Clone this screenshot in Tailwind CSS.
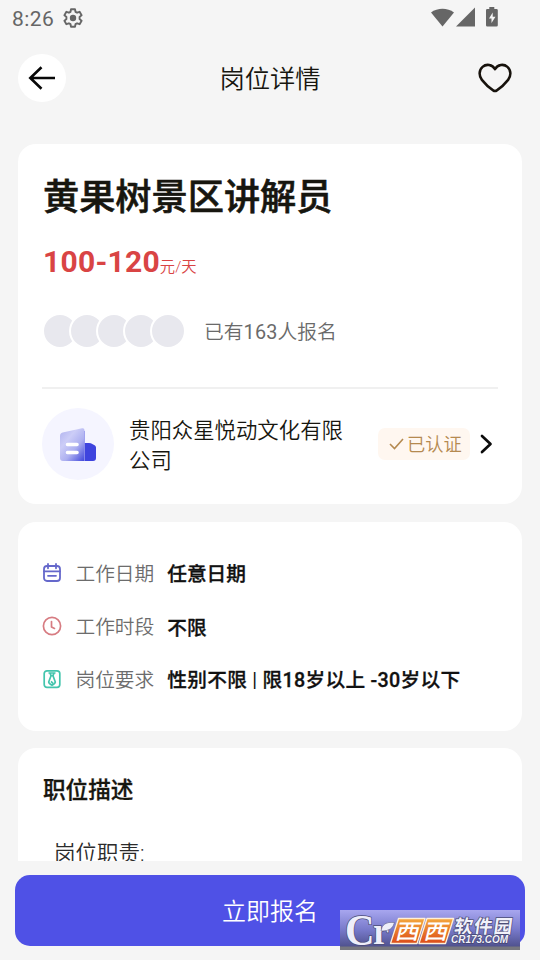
<!DOCTYPE html>
<html lang="zh-CN">
<head>
<meta charset="utf-8">
<meta name="viewport" content="width=device-width, initial-scale=1">
<title>岗位详情</title>
<script src="https://cdn.jsdelivr.net/npm/@tailwindcss/browser@4"></script>
</head>
<body class="font-['Roboto','Noto_Sans_CJK_SC',sans-serif] text-[#17160f]">
<div class="relative flex h-[960px] w-[540px] flex-col overflow-hidden bg-[#f5f5f5]">
  <!-- status bar -->
  <header class="flex h-9 shrink-0 items-center pr-[40px] pl-3 text-[#666]">
    <span class="pt-[2px] text-[21px] leading-9 tracking-[0.4px]">8:26</span>
    <svg class="ml-[9px]" width="20" height="20" viewBox="0 0 20 20" fill="none" stroke="currentColor" stroke-width="1.9" stroke-linejoin="round"><path d="M8 1.2h4l.5 2.6 1.6.9 2.5-.9 2 3.4-2 1.7v2.2l2 1.7-2 3.4-2.5-.9-1.6.9-.5 2.6H8l-.5-2.6-1.6-.9-2.5.9-2-3.4 2-1.7V8.9l-2-1.7 2-3.4 2.5.9 1.6-.9z"/><circle cx="10" cy="10" r="3.2" fill="currentColor" stroke="none"/></svg>
    <svg class="ml-auto" width="69" height="22" viewBox="0 0 69 22" fill="currentColor"><path d="M0 5.500C6.500.5 16.500.5 23 5.500L11.500 19.500z"/><path d="M44 .5v19H25z"/><path fill-rule="evenodd" d="M58.300 0h5v2h2.200q1.300 0 1.300 1.300v15q0 1.300-1.300 1.300h-9.200q-1.300 0-1.300-1.300v-15Q55 2 56.300 2h2zM61.700 5.500L58 11.600h2.500v4.500L64.500 9.700h-2.800z"/></svg>
  </header>

  <!-- navigation -->
  <nav class="grid h-[84px] shrink-0 grid-cols-[48px_1fr_48px] items-center px-[18px]">
    <div class="flex size-12 items-center justify-center rounded-full bg-white">
      <svg width="28" height="24" viewBox="0 0 28 24" fill="none" stroke="#080808" stroke-width="2.600"><path d="M27 12H2.500M13.500 1.200L2.300 12l11.200 10.800"/></svg>
    </div>
    <h1 class="pt-[4px] text-center text-[25.300px] leading-9 font-[350]">岗位详情</h1>
    <svg class="ml-[4px]" width="34" height="31" viewBox="0 0 35 31" fill="none" stroke="#17120c" stroke-width="2.600" stroke-linejoin="round"><path d="M17.500 6C14.800.9 8.500.2 4.700 3.500.8 6.900.8 12.900 4 16.900c3.200 4 8.500 8.900 11.600 10.800q1.900 1.300 3.800 0C22.500 25.800 27.800 20.900 31 16.900c3.200-4 3.200-10-.7-13.400C26.500.2 20.200.9 17.500 6z"/></svg>
  </nav>

  <main class="flex h-[741px] shrink-0 flex-col overflow-hidden px-[18px] pt-6">
    <!-- job summary -->
    <section class="h-[360px] shrink-0 rounded-[18px] bg-white px-6 pt-[29px]">
      <h2 class="pl-px text-[36.200px] leading-[50px] font-medium [-webkit-text-stroke:0.6px_currentColor]">黄果树景区讲解员</h2>
      <div class="mt-[17px] flex h-[44px] items-baseline pl-px text-[#d94444]">
        <span class="text-[30px] leading-[44px] font-bold tracking-[0.250px]">100-120</span><span class="text-[15.300px] font-[350]">元/天</span>
      </div>
      <div class="mt-[26px] flex h-[42px] items-center pl-px">
        <div class="flex -space-x-[9px]">
          <i class="-ml-px size-9 rounded-full border-2 border-white bg-[#e8e8ee]"></i>
          <i class="size-9 rounded-full border-2 border-white bg-[#e8e8ee]"></i>
          <i class="size-9 rounded-full border-2 border-white bg-[#e8e8ee]"></i>
          <i class="size-9 rounded-full border-2 border-white bg-[#e8e8ee]"></i>
          <i class="size-9 rounded-full border-2 border-white bg-[#e8e8ee]"></i>
        </div>
        <span class="ml-[18px] pt-[3px] text-[19.800px] font-[350] text-[#6a6a6a]">已有<span class="font-normal tracking-[0.200px]">163</span>人报名</span>
      </div>
      <div class="mt-[35px] h-[2px] bg-[#f0f0f0]"></div>
      <div class="mt-[19px] flex h-[72px] items-center">
        <div class="flex size-[72px] shrink-0 items-center justify-center rounded-full bg-[#f5f5ff]">
          <svg class="mt-1" width="38" height="36" viewBox="0 0 38 36">
            <defs>
              <linearGradient id="tower" x1=".1" y1="0" x2="1" y2="1"><stop stop-color="#b4b6f0"/><stop offset=".3" stop-color="#cccdf7"/><stop offset=".6" stop-color="#adb0f0"/><stop offset="1" stop-color="#4047dc"/></linearGradient>
            </defs>
            <path d="M22 15h8q2 0 3.300 1l2.700 1.500q1 .8 1 2V30q0 3-3 3H22z" fill="#3e44de"/>
            <path d="M1 8q0-2.800 2.700-3.400L23 .300q2.500-.5 2.500 2V33H4q-3 0-3-3z" fill="url(#tower)"/>
            <path d="M25.500 3v30" stroke="#9497ec" stroke-width=".8"/>
            <path d="M8.500 16.500H18M8.500 24.500H18" stroke="#fff" stroke-width="3.600" stroke-linecap="round"/>
          </svg>
        </div>
        <p class="ml-[15px] w-[220px] shrink-0 pt-[4px] text-[21.400px] leading-[30px] font-[350]">贵阳众星悦动文化有限公司</p>
        <div class="ml-[29px] flex h-8 w-[92px] shrink-0 items-center rounded-[7px] bg-[#fff7f0] pl-[11px] text-[#b58a50]">
          <svg class="shrink-0" width="15" height="14" viewBox="0 0 15 14" fill="none" stroke="currentColor" stroke-width="1.600"><path d="M1 7l4.500 4.500L14 2"/></svg>
          <span class="ml-[3px] pt-[2px] text-[18.300px] font-[350] whitespace-nowrap">已认证</span>
        </div>
        <svg class="ml-[9px] shrink-0" width="15" height="22" viewBox="0 0 15 22" fill="none" stroke="#0c0c0c" stroke-width="2.700" stroke-linecap="round" stroke-linejoin="round"><path d="M3 3l8.500 8L3 19"/></svg>
      </div>
    </section>

    <!-- requirements -->
    <section class="mt-[18px] flex h-[209px] shrink-0 flex-col rounded-[18px] bg-white pr-4 pl-6 pt-[24px] text-[19.700px]">
      <div class="flex h-[53px] items-center">
        <svg width="20" height="20" viewBox="0 0 20 20" fill="none" stroke="#6568cb" stroke-width="1.800" stroke-linecap="round"><rect x="2" y="3" width="16" height="15" rx="3"/><path d="M2 8.300h16M6 1v4.300M14 1v4.300M6 12.800h8"/></svg>
        <span class="ml-[13.500px] pt-[4px] font-[350] text-[#6c6c6c]">工作日期</span><strong class="mt-[5px] ml-[13px] font-medium text-[#111] [-webkit-text-stroke:0.300px_currentColor]">任意日期</strong>
      </div>
      <div class="flex h-[53px] items-center">
        <svg class="mt-px" width="20" height="20" viewBox="0 0 20 20" fill="none" stroke="#d77c82" stroke-width="1.700" stroke-linecap="round" stroke-linejoin="round"><circle cx="10" cy="10" r="8.600"/><path d="M9.500 5.500v5.400l3 1.500"/></svg>
        <span class="ml-[13.500px] pt-[4px] font-[350] text-[#6c6c6c]">工作时段</span><strong class="mt-[6px] ml-[13px] font-medium text-[#111] [-webkit-text-stroke:0.300px_currentColor]">不限</strong>
      </div>
      <div class="flex h-[53px] items-center">
        <svg width="20" height="20" viewBox="0 0 20 20" fill="none" stroke="#43c5ad" stroke-width="1.700" stroke-linejoin="round"><rect x="2.200" y="1.800" width="15.600" height="16.600" rx="2.800"/><path d="M6.500 4h7M8 4l1 2.700h2L12 4M9 6.700L6.700 13q0 1.500 3.300 3.200 3.300-1.700 3.300-3.200L11 6.700M9 12.300l2 2"/></svg>
        <span class="ml-[13.500px] pt-[4px] font-[350] text-[#6c6c6c]">岗位要求</span><strong class="mt-[5px] ml-[13px] font-medium tracking-[0.280px] whitespace-nowrap text-[#111] [-webkit-text-stroke:0.300px_currentColor]">性别不限 <span class="font-normal [-webkit-text-stroke:0px]">|</span> 限18岁以上 -30岁以下</strong>
      </div>
    </section>

    <!-- description -->
    <section class="mt-[17px] h-[300px] shrink-0 rounded-[18px] bg-white px-6 pt-[26px]">
      <h3 class="pl-px text-[22.600px] leading-[34px] font-medium [-webkit-text-stroke:0.300px_currentColor]">职位描述</h3>
      <p class="mt-[30px] pl-[12px] text-[21.500px] leading-[32px] font-[350] text-[#2b2b2b]">岗位职责:</p>
    </section>
  </main>

  <footer class="flex-1 px-[15px] pt-[14px]">
    <button class="flex h-[71px] w-full items-center justify-center rounded-[15px] bg-[#4f51e6] pt-[3px] text-[24px] font-[350] text-white">立即报名</button>
  </footer>

  <!-- site badge -->
  <div class="absolute top-[910px] left-[340px] h-10 w-[180px] bg-linear-to-b from-[#a8a6ef] via-[#7779ca] to-[#484a83]">
    <svg width="180" height="40" viewBox="0 0 180 40">
      <defs>
        <linearGradient id="tile" x1="0" y1="0" x2="0" y2="1"><stop stop-color="#f4a83d"/><stop offset="1" stop-color="#dc4b18"/></linearGradient>
      </defs>
      <rect y="36.500" width="180" height="3.500" fill="#77777f"/>
      <g font-family="Liberation Serif, serif" fill="#eeeefa" stroke="#4c4d77" stroke-width="1.500" paint-order="stroke" font-weight="700">
        <text transform="translate(5 34.500) scale(.93 1)" font-size="44">C</text>
        <text transform="translate(33 34) scale(.95 1)" font-size="38">r</text>
      </g>
      <path d="M41 21q1-10 13.500-8.500-2 9-13.500 8.500z" fill="#eeeefa" stroke="#4c4d77" stroke-width=".5"/>
      <g fill="url(#tile)" stroke="#fff0d8" stroke-width="1.300" stroke-linejoin="round"><path d="M58.500 8.500H85L77 33.500H50.500z"/><path d="M87 8.500h26.500l-8 25H79z"/></g>
      <g font-family="Noto Sans CJK SC, sans-serif" font-weight="500" fill="#fff">
        <text transform="translate(54.500 29) skewX(-14) scale(1.150 1)" font-size="21">西</text><text transform="translate(83 29) skewX(-14) scale(1.150 1)" font-size="21">西</text>
      </g>
      <text transform="translate(113.500 22.500) skewX(-8)" font-family="Noto Sans CJK SC, sans-serif" font-weight="700" font-size="18.500" textLength="58" fill="#f1f1fa" stroke="#4c4d77" stroke-width="1.500" paint-order="stroke">软件园</text>
      <text x="111" y="33" font-family="Liberation Sans, sans-serif" font-size="10.500" font-style="italic" font-weight="700" textLength="57" lengthAdjust="spacingAndGlyphs" fill="#f1f1fa" stroke="#444570" stroke-width="1.300" paint-order="stroke">CR173.COM</text>
    </svg>
  </div>
</div>
</body>
</html>
